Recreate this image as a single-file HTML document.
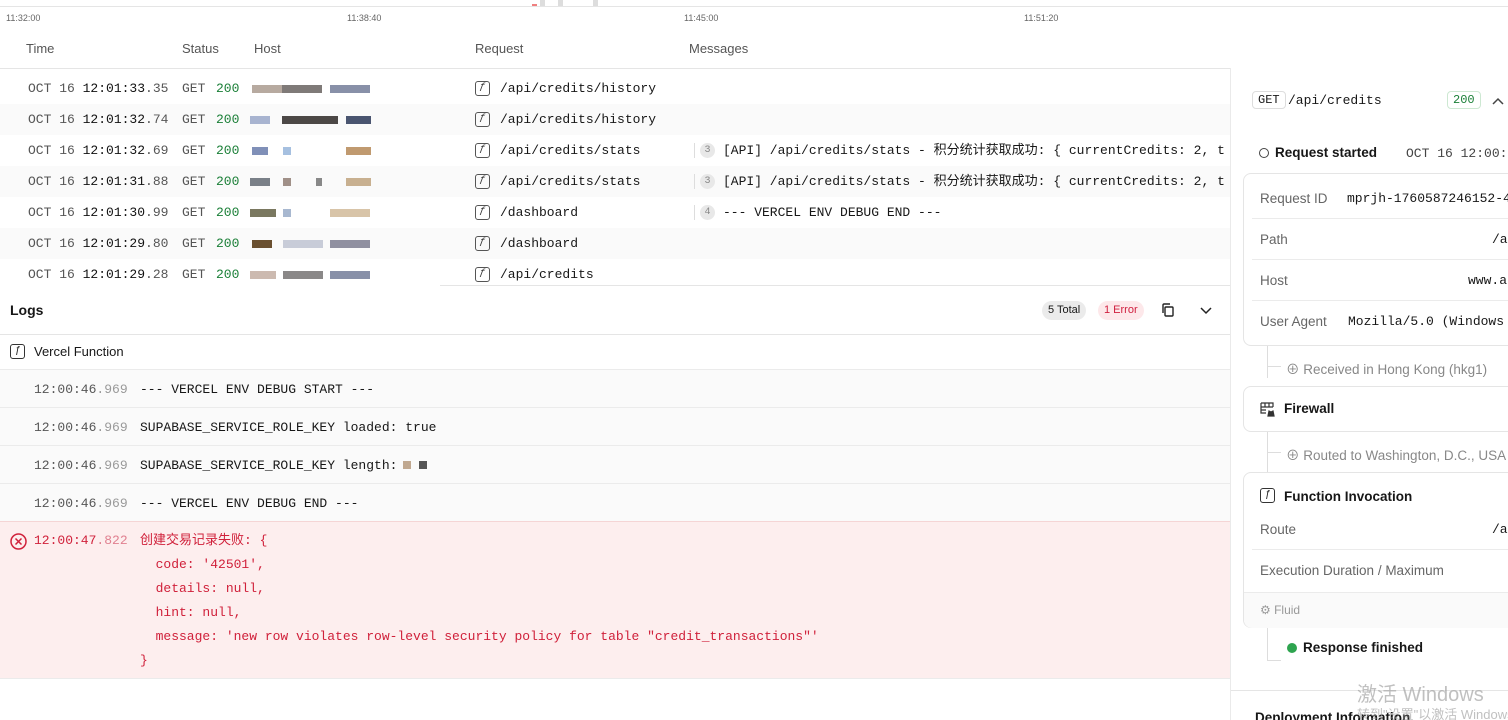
<!DOCTYPE html>
<html><head><meta charset="utf-8"><style>
*{box-sizing:border-box;margin:0;padding:0}
body{width:1508px;height:720px;overflow:hidden;background:#fff;font-family:"Liberation Sans","Noto Sans CJK SC",sans-serif;color:#171717;position:relative}
.mono{font-family:"Liberation Mono","Noto Sans CJK SC",monospace}
.abs{position:absolute;white-space:nowrap}
.tick{font-size:9px;color:#666;top:13px}
.th{top:41px;font-size:13px;color:#555}
.row{position:absolute;left:0;width:1230px;height:31px;font-size:13px}
.row.alt{background:#fafafa}
.row span{position:absolute;top:8px;white-space:nowrap;line-height:15px}
.fi{position:absolute;width:15px;height:15px;border:1.3px solid #555;border-radius:3px;font-size:10px;text-align:center;line-height:12px;font-style:italic;color:#333}
.row .fi{left:475px;top:8px}
.badge{position:absolute;width:15px;height:15px;border-radius:8px;background:#e8e8e8;color:#888;font-size:10px;font-style:normal;text-align:center;line-height:15px;top:8px;left:700px}
.bar{position:absolute;left:694px;top:8px;width:1px;height:15px;background:#ddd}
.blk{position:absolute;top:12px;height:8px}
.lr{position:absolute;left:0;width:1230px;height:38px;background:#fafafa;border-top:1px solid #ebebeb;font-size:13px}
.lr span{position:absolute;top:12px;white-space:nowrap}
.rp{position:absolute;left:1230px;top:68px;width:278px;height:652px;border-left:1px solid #eaeaea;font-size:13.5px;overflow:hidden}
.card{position:absolute;left:12px;width:280px;border:1px solid #e5e5e5;border-radius:8px;background:#fff}
.kv{position:absolute;left:16px;color:#666;white-space:nowrap}
.sep{position:absolute;left:8px;right:0;height:1px;background:#ebebeb}
</style></head><body>
<div class="abs" style="left:0;top:6px;width:1508px;height:1px;background:#e5e5e5"></div>
<div class="abs" style="left:540px;top:0;width:5px;height:6px;background:#ddd"></div>
<div class="abs" style="left:558px;top:0;width:5px;height:6px;background:#ddd"></div>
<div class="abs" style="left:593px;top:0;width:5px;height:6px;background:#ddd"></div>
<div class="abs" style="left:532px;top:4px;width:5px;height:2px;background:#f08080"></div>
<div class="abs tick" style="left:6px">11:32:00</div>
<div class="abs tick" style="left:347px">11:38:40</div>
<div class="abs tick" style="left:684px">11:45:00</div>
<div class="abs tick" style="left:1024px">11:51:20</div>
<div class="abs th" style="left:26px">Time</div>
<div class="abs th" style="left:182px">Status</div>
<div class="abs th" style="left:254px">Host</div>
<div class="abs th" style="left:475px">Request</div>
<div class="abs th" style="left:689px">Messages</div>
<div class="abs" style="left:0;top:68px;width:1230px;height:1px;background:#e5e5e5"></div>

<div class="mono">
<div class="row" style="top:73px"><span style="left:28px;color:#555">OCT 16 <b style="color:#111;font-weight:normal">12:01:33</b>.35</span><span style="left:182px;color:#555">GET</span><span style="left:216px;color:#1a7f37">200</span><div class="blk" style="left:252px;width:60px;background:#b7aaa0"></div><div class="blk" style="left:282px;width:40px;background:#7f7a78"></div><div class="blk" style="left:330px;width:40px;background:#8890a8"></div><i class="fi">ƒ</i><span style="left:500px">/api/credits/history</span></div>
<div class="row alt" style="top:104px"><span style="left:28px;color:#555">OCT 16 <b style="color:#111;font-weight:normal">12:01:32</b>.74</span><span style="left:182px;color:#555">GET</span><span style="left:216px;color:#1a7f37">200</span><div class="blk" style="left:250px;width:20px;background:#a8b4d0"></div><div class="blk" style="left:282px;width:56px;background:#4c4846"></div><div class="blk" style="left:346px;width:25px;background:#4a5570"></div><i class="fi">ƒ</i><span style="left:500px">/api/credits/history</span></div>
<div class="row" style="top:135px"><span style="left:28px;color:#555">OCT 16 <b style="color:#111;font-weight:normal">12:01:32</b>.69</span><span style="left:182px;color:#555">GET</span><span style="left:216px;color:#1a7f37">200</span><div class="blk" style="left:252px;width:16px;background:#8090b8"></div><div class="blk" style="left:283px;width:8px;background:#a6c0e0"></div><div class="blk" style="left:346px;width:25px;background:#c09a70"></div><i class="fi">ƒ</i><span style="left:500px">/api/credits/stats</span><i class="bar"></i><i class="badge">3</i><span style="left:723px">[API] /api/credits/stats - 积分统计获取成功: { currentCredits: 2, t</span></div>
<div class="row alt" style="top:166px"><span style="left:28px;color:#555">OCT 16 <b style="color:#111;font-weight:normal">12:01:31</b>.88</span><span style="left:182px;color:#555">GET</span><span style="left:216px;color:#1a7f37">200</span><div class="blk" style="left:250px;width:20px;background:#7a8088"></div><div class="blk" style="left:283px;width:8px;background:#a09088"></div><div class="blk" style="left:316px;width:6px;background:#888"></div><div class="blk" style="left:346px;width:25px;background:#c8b090"></div><i class="fi">ƒ</i><span style="left:500px">/api/credits/stats</span><i class="bar"></i><i class="badge">3</i><span style="left:723px">[API] /api/credits/stats - 积分统计获取成功: { currentCredits: 2, t</span></div>
<div class="row" style="top:197px"><span style="left:28px;color:#555">OCT 16 <b style="color:#111;font-weight:normal">12:01:30</b>.99</span><span style="left:182px;color:#555">GET</span><span style="left:216px;color:#1a7f37">200</span><div class="blk" style="left:250px;width:26px;background:#7a7860"></div><div class="blk" style="left:283px;width:8px;background:#a8b8d0"></div><div class="blk" style="left:330px;width:40px;background:#d8c4a8"></div><i class="fi">ƒ</i><span style="left:500px">/dashboard</span><i class="bar"></i><i class="badge">4</i><span style="left:723px">--- VERCEL ENV DEBUG END ---</span></div>
<div class="row alt" style="top:228px"><span style="left:28px;color:#555">OCT 16 <b style="color:#111;font-weight:normal">12:01:29</b>.80</span><span style="left:182px;color:#555">GET</span><span style="left:216px;color:#1a7f37">200</span><div class="blk" style="left:252px;width:20px;background:#6a5030"></div><div class="blk" style="left:283px;width:40px;background:#c8ccd8"></div><div class="blk" style="left:330px;width:40px;background:#9090a0"></div><i class="fi">ƒ</i><span style="left:500px">/dashboard</span></div>
<div class="row" style="top:259px"><span style="left:28px;color:#555">OCT 16 <b style="color:#111;font-weight:normal">12:01:29</b>.28</span><span style="left:182px;color:#555">GET</span><span style="left:216px;color:#1a7f37">200</span><div class="blk" style="left:250px;width:26px;background:#ccbab0"></div><div class="blk" style="left:283px;width:40px;background:#8a8888"></div><div class="blk" style="left:330px;width:40px;background:#8890a8"></div><i class="fi">ƒ</i><span style="left:500px">/api/credits</span></div>
</div>
<div class="abs" style="left:440px;top:285px;width:790px;height:1px;background:#e5e5e5"></div>

<div class="abs" style="left:10px;top:302px;font-size:14px;font-weight:bold">Logs</div>
<div class="abs" style="left:1042px;top:301px;height:19px;padding:0 6px;border-radius:10px;background:#ebebeb;font-size:11px;line-height:19px">5 Total</div>
<div class="abs" style="left:1098px;top:301px;height:19px;padding:0 6px;border-radius:10px;background:#fde8ea;color:#d02040;font-size:11px;line-height:19px">1 Error</div>
<svg class="abs" style="left:1160px;top:302px" width="16" height="16" viewBox="0 0 16 16" fill="none" stroke="#222" stroke-width="1.4"><rect x="5" y="5" width="8" height="9" rx="1"/><path d="M3 11V3a1 1 0 0 1 1-1h6"/></svg>
<svg class="abs" style="left:1199px;top:303px" width="14" height="14" viewBox="0 0 14 14" fill="none" stroke="#222" stroke-width="1.5"><path d="M2 5l5 5 5-5"/></svg>
<div class="abs" style="left:0;top:334px;width:1230px;height:1px;background:#e5e5e5"></div>
<div class="abs" style="left:10px;top:344px;width:15px;height:15px;border:1.3px solid #333;border-radius:3px;font-size:10px;text-align:center;line-height:12px;font-style:italic">ƒ</div>
<div class="abs" style="left:34px;top:344px;font-size:13px">Vercel Function</div>

<div class="mono">
<div class="lr" style="top:369px"><span style="left:34px;color:#555">12:00:46<span style="position:static;color:#999">.969</span></span><span style="left:140px">--- VERCEL ENV DEBUG START ---</span></div>
<div class="lr" style="top:407px"><span style="left:34px;color:#555">12:00:46<span style="position:static;color:#999">.969</span></span><span style="left:140px">SUPABASE_SERVICE_ROLE_KEY loaded: true</span></div>
<div class="lr" style="top:445px"><span style="left:34px;color:#555">12:00:46<span style="position:static;color:#999">.969</span></span><span style="left:140px">SUPABASE_SERVICE_ROLE_KEY length:</span></div>
<div class="abs" style="left:403px;top:461px;width:8px;height:8px;background:#c0a890"></div>
<div class="abs" style="left:419px;top:461px;width:8px;height:8px;background:#555"></div>
<div class="lr" style="top:483px"><span style="left:34px;color:#555">12:00:46<span style="position:static;color:#999">.969</span></span><span style="left:140px">--- VERCEL ENV DEBUG END ---</span></div>
<div class="abs" style="left:0;top:521px;width:1230px;height:158px;background:#fdeeee;border-top:1px solid #f5d5d5;border-bottom:1px solid #ebebeb;color:#d0203a;font-size:13px;line-height:24px">
<svg class="abs" style="left:10px;top:11px" width="17" height="17" viewBox="0 0 17 17" fill="none" stroke="#d0203a" stroke-width="1.5"><circle cx="8.5" cy="8.5" r="7.5"/><path d="M5.5 5.5l6 6M11.5 5.5l-6 6"/></svg>
<div class="abs" style="left:34px;top:7px">12:00:47<span style="color:#e08090">.822</span></div>
<div class="abs" style="left:140px;top:7px;white-space:pre">创建交易记录失败: {
  code: '42501',
  details: null,
  hint: null,
  message: 'new row violates row-level security policy for table "credit_transactions"'
}</div>
</div>
</div>

<div class="rp">
<div class="abs mono" style="left:21px;top:23px;border:1px solid #ddd;border-radius:4px;padding:1px 5px;font-size:12px">GET</div>
<div class="abs mono" style="left:57px;top:25px;font-size:13px">/api/credits</div>
<div class="abs mono" style="left:216px;top:23px;border:1px solid #cde8d2;border-radius:4px;padding:1px 5px;font-size:12px;color:#1a7f37">200</div>
<svg class="abs" style="left:260px;top:27px" width="14" height="12" viewBox="0 0 14 12" fill="none" stroke="#444" stroke-width="1.5"><path d="M2 9l5-5 5 5"/></svg>
<div class="abs" style="left:28px;top:80px;width:10px;height:10px;border:1.3px solid #444;border-radius:50%"></div>
<div class="abs" style="left:44px;top:77px;font-weight:bold;font-size:13.5px">Request started</div>
<div class="abs mono" style="left:175px;top:78px;font-size:13px;color:#444">OCT 16 12:00:4</div>
<div class="card" style="top:105px;height:173px">
<div class="kv" style="top:17px">Request ID</div><div class="abs mono" style="left:103px;top:17px;font-size:13px">mprjh-1760587246152-4</div>
<div class="sep" style="top:44px"></div>
<div class="kv" style="top:58px">Path</div><div class="abs mono" style="left:248px;top:58px;font-size:13px">/ap</div>
<div class="sep" style="top:85px"></div>
<div class="kv" style="top:99px">Host</div><div class="abs mono" style="left:224px;top:99px;font-size:13px">www.a</div>
<div class="sep" style="top:126px"></div>
<div class="kv" style="top:140px">User Agent</div><div class="abs mono" style="left:104px;top:140px;font-size:13px">Mozilla/5.0 (Windows</div>
</div>
<div class="abs" style="left:36px;top:278px;width:1px;height:32px;background:#ddd"></div>
<div class="abs" style="left:36px;top:298px;width:14px;height:1px;background:#ddd"></div>
<div class="abs" style="left:55px;top:290px;color:#888;font-size:13.5px">⊕ Received in Hong Kong (hkg1)</div>
<div class="card" style="top:318px;height:46px">
<svg class="abs" style="left:16px;top:15px" width="16" height="15" viewBox="0 0 16 15" fill="none" stroke="#333" stroke-width="1.2"><path d="M1 1h12v4M1 1v10h5M1 5h12M1 8h5M5 1v4M9 1v4"/><path d="M8 14l1-5 2 1 2-1 1 5z" fill="#333"/></svg>
<div class="abs" style="left:40px;top:14px;font-weight:bold;font-size:13.5px">Firewall</div></div>
<div class="abs" style="left:36px;top:364px;width:1px;height:40px;background:#ddd"></div>
<div class="abs" style="left:36px;top:384px;width:14px;height:1px;background:#ddd"></div>
<div class="abs" style="left:55px;top:376px;color:#888;font-size:13.5px">⊕ Routed to Washington, D.C., USA</div>
<div class="card" style="top:404px;height:156px">
<div class="abs" style="left:16px;top:15px;width:15px;height:15px;border:1.3px solid #333;border-radius:3px;font-size:10px;text-align:center;line-height:12px;font-style:italic">ƒ</div>
<div class="abs" style="left:40px;top:16px;font-weight:bold;font-size:13.5px">Function Invocation</div>
<div class="kv" style="top:49px">Route</div><div class="abs mono" style="left:248px;top:49px;font-size:13px">/ap</div>
<div class="sep" style="top:76px"></div>
<div class="kv" style="top:90px">Execution Duration / Maximum</div>
<div class="abs" style="left:0;top:119px;width:280px;height:36px;background:#fafafa;border-top:1px solid #ebebeb;border-radius:0 0 8px 8px"></div>
<div class="abs" style="left:16px;top:130px;color:#999;font-size:12px">⚙ Fluid</div>
</div>
<div class="abs" style="left:36px;top:560px;width:1px;height:32px;background:#ddd"></div>
<div class="abs" style="left:36px;top:592px;width:14px;height:1px;background:#ddd"></div>
<div class="abs" style="left:56px;top:575px;width:10px;height:10px;border-radius:50%;background:#2ea44f"></div>
<div class="abs" style="left:72px;top:572px;font-weight:bold;font-size:13.5px">Response finished</div>
<div class="abs" style="left:0;top:622px;width:278px;height:1px;background:#e5e5e5"></div>
<div class="abs" style="left:24px;top:642px;font-weight:bold;font-size:13.5px">Deployment Information</div>
<div class="abs" style="left:126px;top:610px;font-size:20px;color:rgba(150,150,150,.6)">激活 Windows</div>
<div class="abs" style="left:126px;top:636px;font-size:13px;color:rgba(150,150,150,.6)">转到"设置"以激活 Windows</div>
</div>
</body></html>
